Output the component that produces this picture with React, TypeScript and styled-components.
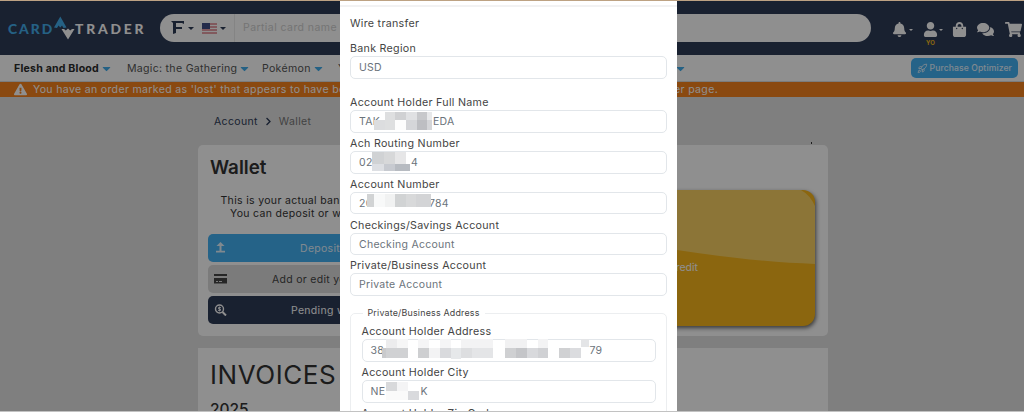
import styled, { createGlobalStyle } from 'styled-components'
import {
  FaBell,
  FaUser,
  FaShoppingBag,
  FaComments,
  FaShoppingCart,
  FaExclamationTriangle,
  FaCaretDown,
  FaChevronRight,
} from 'react-icons/fa'
import { LuRocket } from 'react-icons/lu'

const GlobalStyle = createGlobalStyle`
  * { box-sizing: border-box; }
  body {
    margin: 0;
    overflow: hidden;
    background: #e3e3e3;
    font-family: Inter, 'Liberation Sans', sans-serif;
    color: #333;
  }
`

const Page = styled.div`
  position: relative;
  height: 412px;
  overflow: hidden;
  white-space: nowrap;
  border-top: 1px solid #bda283;
  border-bottom: 1px solid #c2c2c2;
`

const Header = styled.header`
  display: flex;
  align-items: center;
  height: 54px;
  padding-left: 8px;
  background: #2e3b57;
`

const Logo = styled.div`
  display: flex;
  align-items: center;
  width: 152px;
  color: #fff;
  font: 900 13.8px Lato, sans-serif;
  letter-spacing: 2.8px;

  span:first-child {
    width: 46px;
    color: #42aeec;
    letter-spacing: 2px;
  }
  svg { flex: none; }
`

const SearchBar = styled.div`
  display: flex;
  align-items: center;
  width: 711px;
  height: 28px;
  padding-left: 11px;
  border-radius: 14px;
  background: #fff;
  color: #2e3b57;
  font-size: 10.5px;

  svg { flex: none; }
`

const Placeholder = styled.span`
  margin-left: 8px;
  padding-left: 8px;
  line-height: 28px;
  border-left: 1px solid #ececec;
  color: #d0d0d0;
  letter-spacing: 0.43px;
`

const HeaderIcons = styled.div`
  display: flex;
  align-items: center;
  margin: 3px 0 0 21px;
  color: #fff;

  svg { flex: none; }
`

const UserIcon = styled.div`
  position: relative;
  display: flex;
  margin-left: 10px;

  small {
    position: absolute;
    top: 17px;
    left: 3px;
    color: #f2b818;
    font-size: 6px;
    font-weight: 700;
    line-height: 7px;
  }
`

const Caret = styled.i<{ $size?: number }>`
  display: inline-block;
  border: ${p => p.$size || 3}px solid transparent;
  border-top-color: currentColor;
  border-bottom: 0;
`

const Nav = styled.nav`
  display: flex;
  align-items: center;
  height: 27px;
  padding: 0 6px 0 14px;
  background: #fff;
  border-bottom: 1px solid #ddd;
  font-size: 10.6px;
`

const NavItem = styled.span<{ $active?: boolean; $width: number }>`
  display: flex;
  align-items: center;
  gap: 3px;
  flex: none;
  width: ${p => p.$width}px;
  color: ${p => (p.$active ? '#2b2b2b' : '#555')};
  font-weight: ${p => (p.$active ? 700 : 400)};
  letter-spacing: ${p => (p.$active ? 0.2 : 0.28)}px;

  svg {
    width: 9px;
    height: 13px;
    color: #42aeec;
  }
`

const Optimizer = styled.button`
  display: flex;
  align-items: center;
  gap: 2px;
  width: 107px;
  height: 20px;
  margin-left: auto;
  padding: 0 6px;
  border: 0;
  border-radius: 5px;
  background: #42b0f3;
  color: #e4f4ff;
  font: 500 8.6px Inter, sans-serif;
  letter-spacing: 0.1px;
`

const Warning = styled.div`
  display: flex;
  align-items: center;
  gap: 6px;
  height: 15px;
  padding-left: 14px;
  background: #f6821d;
  color: #fff;
  font-size: 10.6px;
  letter-spacing: 0.31px;

  span:last-child {
    width: 301px;
    text-align: right;
  }
`

const WarningStart = styled.span`
  width: 378px;
`

const Content = styled.main`
  width: 630px;
  margin-left: 198px;
`

const Breadcrumb = styled.div`
  display: flex;
  align-items: center;
  gap: 6px;
  height: 48px;
  padding: 0 16px;
  color: #777;
  font-size: 10.5px;
  letter-spacing: 0.35px;

  b { color: #2e3b57; font-weight: 400; }

  &::after {
    content: '';
    width: 1px;
    height: 2px;
    margin: 44px 0 0 auto;
    background: #333;
  }
`

const WalletPanel = styled.section`
  display: flex;
  justify-content: space-between;
  height: 191px;
  padding: 0 13px 0 10px;
  border-radius: 5px;
  background: #fff;
`

const WalletColumn = styled.div`
  width: 270px;

  h2 {
    margin: 0;
    padding: 12px 2px 0;
    font-size: 18.8px;
    font-weight: 600;
    line-height: 22px;
  }
  p {
    margin: 16px 0 14px;
    font-size: 10.5px;
    letter-spacing: 0.33px;
    line-height: 12.5px;
  }
  p span {
    display: block;
    padding-left: 12.5px;
  }
  p span + span { padding-left: 22px; }
`

const Action = styled.button<{ $bg: string; $color: string; $indent: number }>`
  display: flex;
  align-items: center;
  width: 270px;
  height: 28px;
  margin: 0 0 3px;
  padding: 0 6px;
  border: 0;
  border-radius: 5px;
  background: ${p => p.$bg};
  color: ${p => p.$color};
  font: 10.5px Inter, sans-serif;
  letter-spacing: 0.3px;

  span { margin-left: ${p => p.$indent}px; }
`

const CreditCard = styled.div`
  position: relative;
  width: 270px;
  height: 136px;
  margin-top: 45px;
  overflow: hidden;
  border-radius: 12px;
  background: #f8b61b;
  box-shadow: 1px 2px 4px rgba(0, 0, 0, 0.6);
  color: #fff;
  font-size: 10.5px;

  svg { position: absolute; inset: 0; }
  span {
    position: relative;
    display: block;
    width: 153px;
    padding-top: 71px;
    text-align: right;
  }
`

const Invoices = styled.section`
  height: 80px;
  margin-top: 12px;
  padding: 13px 12px 0;
  background: #fff;

  h1 {
    margin: 0;
    font-size: 26px;
    font-weight: 400;
    line-height: 27px;
    letter-spacing: 0.55px;
  }
  h3 {
    margin: 12px 0 0;
    font-size: 15.5px;
    font-weight: 500;
    line-height: 20px;
  }
`

const Overlay = styled.div`
  position: absolute;
  inset: 0;
  background: rgba(0, 0, 0, 0.44);
`

const Modal = styled.div`
  position: absolute;
  top: -1px;
  left: 340px;
  width: 337px;
  height: 412px;
  overflow: hidden;
  padding: 0 10px;
  border-top: 1px solid #f8dcc0;
  border-bottom: 1px solid #e6e6e6;
  background: #fff;
  color: #444;
  font-size: 10.7px;
  letter-spacing: 0.28px;
`

const Divider = styled.div`
  height: 6px;
  margin: 0 -10px 10px;
  border-bottom: 2px solid #f2f2f3;
`

const Title = styled.div`
  height: 24px;
  line-height: 13px;
`

const Field = styled.label<{ $gap?: number }>`
  display: block;
  margin-bottom: ${p => p.$gap ?? 3.1}px;
  line-height: 15px;
`

const Input = styled.div`
  position: relative;
  height: 22.7px;
  padding-left: 8px;
  border: 1px solid #e2e6ea;
  border-radius: 5px;
  color: #6b737b;
  font-size: 10.5px;
  line-height: 21.5px;
`

const Fieldset = styled.fieldset`
  height: 130px;
  margin: 10.2px 0 0;
  padding: 4px 10.5px 0;
  border: 1px solid #eceef0;
  border-radius: 5px;

  legend {
    margin-left: 1px;
    padding: 0 5px;
    font-size: 8.9px;
    line-height: 14px;
    letter-spacing: 0.2px;
  }
`

const Mosaic = styled.svg`
  position: absolute;
  top: 0;
  left: -1px;
  overflow: visible;
  shape-rendering: crispEdges;
`

const ValueTail = styled.span<{ $left: number }>`
  position: absolute;
  left: ${p => p.$left}px;
`

type Tile = [x: number, y: number, w: number, h: number, fill: string]

interface HiddenValueProps {
  start: string
  end: string
  endX: number
  tiles: Tile[]
}

const HiddenValue = ({ start, end, endX, tiles }: HiddenValueProps) => (
  <Input>
    {start}
    <ValueTail $left={endX}>{end}</ValueTail>
    <Mosaic width='290' height='21'>
      {tiles.map(([x, y, w, h, fill]) => (
        <rect key={`${x}-${y}`} x={x} y={y} width={w} height={h} fill={fill} />
      ))}
    </Mosaic>
  </Input>
)

const nameTiles: Tile[] = [
  [24, 9, 11, 10, '#dcdddf'],
  [35, 1, 10, 18, '#dedfe0'],
  [45, 1, 11, 8, '#d0d1d3'],
  [45, 9, 11, 10, '#fdfdfd'],
  [56, 1, 11, 8, '#e0e1e3'],
  [56, 9, 11, 10, '#d5d6d9'],
  [67, 1, 10, 8, '#c7c8cb'],
  [67, 9, 10, 10, '#bdbec2'],
  [77, 1, 5, 8, '#e7e8ea'],
  [77, 9, 5, 10, '#d4d5d8'],
]

const routingTiles: Tile[] = [
  [22, 0, 12, 12, '#d0d2d4'],
  [34, 0, 11, 12, '#d7d8d9'],
  [45, 0, 11, 12, '#e6e6e7'],
  [22, 12, 12, 7, '#dddfe3'],
  [34, 12, 11, 7, '#c7cad0'],
  [45, 12, 15, 7, '#b7bbc1'],
]

const accountTiles: Tile[] = [
  [17, 1, 7, 13, '#d1d3d4'],
  [24, 1, 11, 13, '#f8f9f9'],
  [35, 1, 10, 13, '#f1f2f2'],
  [45, 1, 11, 13, '#d1d3d4'],
  [56, 1, 10, 13, '#d8d9da'],
  [66, 1, 15, 13, '#d3d4d6'],
]

const addressTiles: Tile[] = [
  [20, 8, 4, 10, '#c9cacc'],
  [24, -1, 11, 9, '#ececed'],
  [24, 8, 22, 10, '#d0d1d3'],
  [35, -1, 11, 9, '#f6f6f6'],
  [56, -1, 11, 9, '#f5f5f6'],
  [56, 8, 11, 10, '#cecfd1'],
  [67, 8, 11, 10, '#f3f3f4'],
  [78, -1, 11, 9, '#f5f5f6'],
  [78, 8, 11, 10, '#d9dadd'],
  [89, 8, 10, 11, '#e6e8ea'],
  [99, -1, 32, 9, '#f3f3f4'],
  [99, 8, 11, 10, '#dddee0'],
  [110, 8, 21, 10, '#e4e5e7'],
  [143, -1, 22, 9, '#f1f1f2'],
  [143, 8, 11, 10, '#cfd0d2'],
  [154, 8, 11, 10, '#c4c5c8'],
  [165, 8, 11, 10, '#d8d9dc'],
  [176, -1, 10, 9, '#f3f3f4'],
  [176, 8, 10, 10, '#d0d1d4'],
  [197, 8, 11, 10, '#d0d1d3'],
  [208, 8, 11, 10, '#dbdcdf'],
  [219, -1, 8, 8, '#e4e5e7'],
]

const cityTiles: Tile[] = [
  [24, 1, 11, 9, '#d8d9db'],
  [35, 1, 11, 9, '#f4f4f5'],
  [24, 10, 22, 9, '#fafafa'],
  [46, 10, 11, 9, '#d9dadd'],
]

const App = () => (
  <>
    <GlobalStyle />
    <Page>
      <Header>
        <Logo>
          <span>CARD</span>
          <svg width='21' height='24' viewBox='0 0 21 24'>
            <path d='M0 11.5 6.3.5 12.5 11.5 9.5 12 8 9.5 6.3 11.5 4.5 9.5 3 12Z' fill='#42aeec' />
            <path d='M7.5 13H10L11.8 14.5 14 12.5 16.2 14.5 18 13H20.5L14 23.5Z' fill='#fff' />
          </svg>
          <span>TRADER</span>
        </Logo>
        <SearchBar>
          <svg width='17' height='16' viewBox='0 0 17 16'>
            <path d='M0 1H13V4L11 3H5V7H11V9H5V13L2 14V3Z' fill='currentColor' />
          </svg>
          <Caret />
          <svg width='15' height='11' viewBox='0 0 15 11' style={{ margin: '0 3px 0 8px' }}>
            <path d='M0 0H15V11H0Z' fill='#fff' />
            <path d='M0 1H15M0 4H15M0 7H15M0 10H15' stroke='#e0808a' strokeWidth='1.5' />
            <path d='M0 0H8V6H0Z' fill='#414e84' />
          </svg>
          <Caret />
          <Placeholder>Partial card name</Placeholder>
        </SearchBar>
        <HeaderIcons>
          <FaBell size={15} />
          <Caret $size={2} style={{ marginLeft: 2 }} />
          <UserIcon>
            <FaUser size={15} />
            <small>YO</small>
          </UserIcon>
          <Caret $size={2} style={{ marginLeft: 1 }} />
          <FaShoppingBag size={15} style={{ marginLeft: 9 }} />
          <FaComments size={17} style={{ marginLeft: 10 }} />
          <FaShoppingCart size={17} style={{ marginLeft: 11 }} />
        </HeaderIcons>
      </Header>
      <Nav>
        <NavItem $active $width={113}>
          Flesh and Blood <FaCaretDown />
        </NavItem>
        <NavItem $width={135}>
          Magic: the Gathering <FaCaretDown />
        </NavItem>
        <NavItem $width={76}>
          Pokémon <FaCaretDown />
        </NavItem>
        <NavItem $width={338}>Y</NavItem>
        <NavItem $width={20}>
          <FaCaretDown />
        </NavItem>
        <Optimizer>
          <LuRocket size={11} /> Purchase Optimizer
        </Optimizer>
      </Nav>
      <Warning>
        <FaExclamationTriangle size={13} />
        <WarningStart>You have an order marked as 'lost' that appears to have been</WarningStart>
        <span>order page.</span>
      </Warning>
      <Content>
        <Breadcrumb>
          <b>Account</b> <FaChevronRight size={9} color='#2e3b57' /> Wallet
        </Breadcrumb>
        <WalletPanel>
          <WalletColumn>
            <h2>Wallet</h2>
            <p>
              <span>This is your actual bank</span>
              <span>You can deposit or w</span>
            </p>
            <Action $bg='#42b0f3' $color='#e4f4ff' $indent={73}>
              <svg width='13' height='12' viewBox='0 0 13 12' fill='currentColor'>
                <path d='M6.5 0 10.5 4H7.5V9H5.5V4H2.5ZM2 8.7H11V10.5H2Z' />
              </svg>
              <span>Deposit</span>
            </Action>
            <Action $bg='#dcdcdc' $color='#444' $indent={45}>
              <svg width='13' height='12' viewBox='0 0 13 12' fill='currentColor'>
                <path d='M0 1H13V3H0ZM0 5H13V10.5H0Z' />
                <path d='M2 8.5H4M5 8.5H8' stroke='#dcdcdc' />
              </svg>
              <span>Add or edit your</span>
            </Action>
            <Action $bg='#2e3b57' $color='#fff' $indent={64}>
              <svg width='13' height='12' viewBox='0 0 13 12' fill='none' stroke='currentColor'>
                <circle cx='5.5' cy='5' r='4' strokeWidth='1.4' />
                <path d='M8.5 8 12 11.5' strokeWidth='2' />
                <path d='M7 3.5H4.5V5H6.5V6.5H4M5.5 2.5V7.5' strokeWidth='.8' />
              </svg>
              <span>Pending withdrawals</span>
            </Action>
          </WalletColumn>
          <CreditCard>
            <svg width='270' height='136'>
              <path d='M0 0H256Q265 5 270 16V74Q210 72 132 60L0 40Z' fill='#fad162' />
            </svg>
            <span>Credit</span>
          </CreditCard>
        </WalletPanel>
        <Invoices>
          <h1>INVOICES</h1>
          <h3>2025</h3>
        </Invoices>
      </Content>
      <Overlay />
      <Modal>
        <Divider />
        <Title>Wire transfer</Title>
        <Field $gap={16.5}>
          Bank Region
          <Input>USD</Input>
        </Field>
        <Field>
          Account Holder Full Name
          <HiddenValue start='TAK' end='EDA' endX={82} tiles={nameTiles} />
        </Field>
        <Field>
          Ach Routing Number
          <HiddenValue start='02' end='4' endX={60} tiles={routingTiles} />
        </Field>
        <Field>
          Account Number
          <HiddenValue start='20' end='784' endX={78} tiles={accountTiles} />
        </Field>
        <Field>
          Checkings/Savings Account
          <Input>Checking Account</Input>
        </Field>
        <Field>
          Private/Business Account
          <Input>Private Account</Input>
        </Field>
        <Fieldset>
          <legend>Private/Business Address</legend>
          <Field>
            Account Holder Address
            <HiddenValue start='38' end='79' endX={227} tiles={addressTiles} />
          </Field>
          <Field>
            Account Holder City
            <HiddenValue start='NE' end='K' endX={58} tiles={cityTiles} />
          </Field>
          <Field>Account Holder Zip Code</Field>
        </Fieldset>
      </Modal>
    </Page>
  </>
)

export default App
